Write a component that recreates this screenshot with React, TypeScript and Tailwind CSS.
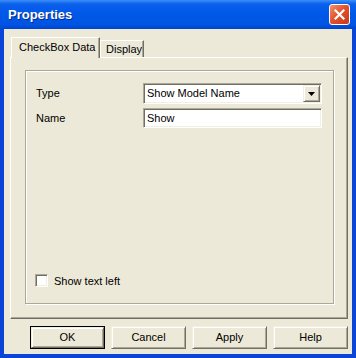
const raised =
  "border border-t-[#F1EFE2] border-l-[#F1EFE2] border-r-[#716F64] border-b-[#716F64] shadow-[inset_1px_1px_0_#fff,inset_-1px_-1px_0_#ACA899]";
const sunken =
  "border border-t-[#ACA899] border-l-[#ACA899] border-r-white border-b-white shadow-[inset_1px_1px_0_#716F64,inset_-1px_-1px_0_#F1EFE2]";

function CloseButton() {
  return (
    <div className="w-[21px] h-[21px] rounded-[3px] border border-white bg-[linear-gradient(135deg,#F0946F_0%,#E2532E_45%,#C9381A_100%)] flex items-center justify-center">
      <svg width="11" height="11" viewBox="0 0 11 11">
        <path d="M1.5 1.5 L9.5 9.5 M9.5 1.5 L1.5 9.5" stroke="#fff" strokeWidth="2.2" strokeLinecap="square" />
      </svg>
    </div>
  );
}

function Button({ label, isDefault }: { label: string; isDefault?: boolean }) {
  if (isDefault) {
    return (
      <div className="w-[75px] h-[23px] border border-black">
        <div className={`w-full h-full ${raised} bg-[#ECE9D8] flex items-center justify-center`}>{label}</div>
      </div>
    );
  }
  return (
    <div className={`w-[75px] h-[23px] ${raised} bg-[#ECE9D8] flex items-center justify-center`}>{label}</div>
  );
}

export default function App() {
  return (
    <div className="w-[356px] h-[358px] flex flex-col bg-[#0B45D8] font-['Liberation_Sans',Arial,sans-serif] text-[11px] text-black">
      {/* title bar */}
      <div className="h-[29px] shrink-0 flex items-center justify-between pl-[8px] pr-[6px] bg-[linear-gradient(180deg,#3C8FF8_0%,#0B60EC_14%,#0058E8_50%,#0054E2_85%,#0043CC_100%)]">
        <span className="text-white font-bold text-[13px] [text-shadow:1px_1px_0_#0A2A8C]">Properties</span>
        <CloseButton />
      </div>

      <div className="flex-1 mx-[4px] mb-[4px] bg-[#ECE9D8] flex flex-col pl-[6px] pr-[4px] pt-[8px]">
        {/* tabs */}
        <div className="flex items-end h-[20px] pl-[1px] relative z-10">
          <div className="w-[89px] h-[21px] -mb-[1px] bg-[#ECE9D8] border-t border-l border-white border-r border-r-[#716F64] shadow-[inset_-1px_0_0_#ACA899] pl-[7px] flex items-center pb-[1px]">
            CheckBox Data
          </div>
          <div className="w-[44px] h-[17px] bg-[#ECE9D8] border-t border-l border-white border-r border-r-[#716F64] shadow-[inset_-1px_0_0_#ACA899] pl-[5px] flex items-center">
            Display
          </div>
        </div>

        {/* panel */}
        <div className="w-[338px] h-[262px] border border-t-white border-l-white border-r-[#716F64] border-b-[#716F64] shadow-[inset_-1px_-1px_0_#ACA899] pl-[14px] pt-[12px]">
          <div className="w-[309px] h-[234px] border border-[#ACA899] shadow-[inset_1px_1px_0_#fff,1px_1px_0_#fff] flex flex-col pl-[9px] pt-[12px] pb-[14px]">
            <div className="flex items-center h-[21px]">
              <span className="w-[108px] pl-[1px]">Type</span>
              <div className={`w-[179px] h-[21px] ${sunken} bg-white flex items-center justify-between pl-[3px] pr-[1px]`}>
                <span>Show Model Name</span>
                <div className={`w-[17px] h-[17px] ${raised} bg-[#ECE9D8] flex items-center justify-center`}>
                  <svg width="7" height="4" viewBox="0 0 7 4">
                    <path d="M0 0 H7 L3.5 4 Z" fill="#000" />
                  </svg>
                </div>
              </div>
            </div>
            <div className="flex items-center h-[20px] mt-[4px]">
              <span className="w-[108px] pl-[1px]">Name</span>
              <div className={`w-[179px] h-[20px] ${sunken} bg-white flex items-center pl-[3px]`}>Show</div>
            </div>
            <div className="mt-auto flex items-center gap-[6px]">
              <div className={`w-[13px] h-[13px] ${sunken} bg-white`} />
              <span>Show text left</span>
            </div>
          </div>
        </div>

        {/* buttons */}
        <div className="flex justify-end gap-[6px] mt-[7px]">
          <Button label="OK" isDefault />
          <Button label="Cancel" />
          <Button label="Apply" />
          <Button label="Help" />
        </div>
      </div>
    </div>
  );
}
